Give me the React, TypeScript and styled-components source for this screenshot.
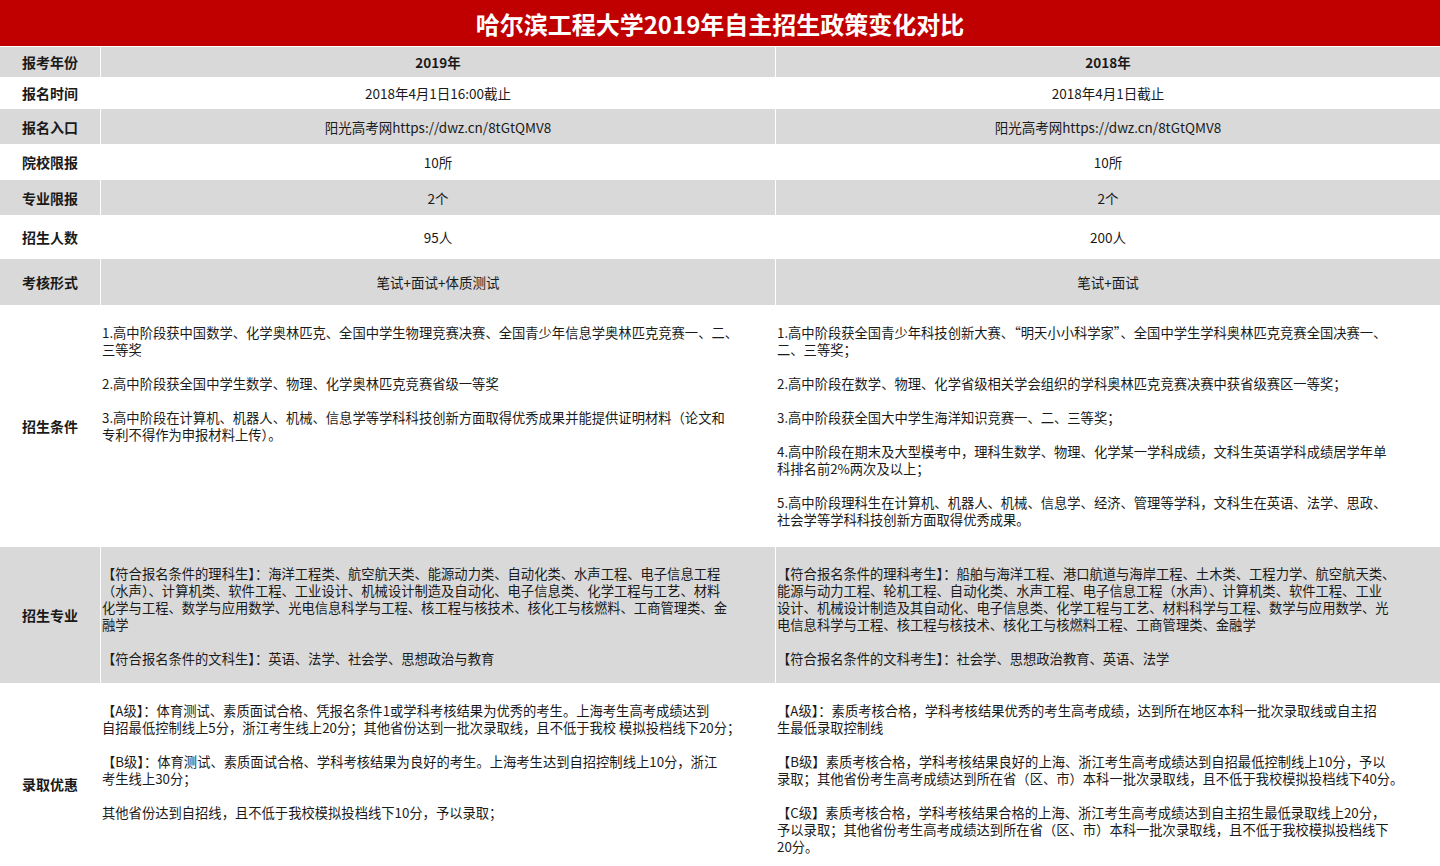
import React from "react";
import styled, { createGlobalStyle } from "styled-components";

const G = createGlobalStyle`
  body { margin: 0; background: #fff; font-family: "Noto Sans CJK SC", "Noto Sans", sans-serif; color: #1a1a1a; }
`;

const Page = styled.div`width: 1440px; height: 866px; overflow: hidden; background: #fff;`;
const Title = styled.div`
  height: 46px; background: #c00000; color: #fff; font-weight: 700; font-size: 24px;
  display: flex; align-items: center; justify-content: center; border-bottom: 1px solid #fff;
`;
const Row = styled.div<{ h: number; gray?: boolean }>`
  display: grid; grid-template-columns: 100px 674px 1fr; column-gap: 1px;
  height: ${(p) => p.h}px; background: ${(p) => (p.gray ? "#fff" : "#fff")};
  border-bottom: 1px solid #fff;
  > div { background: ${(p) => (p.gray ? "#d9d9d9" : "#fff")}; }
`;
const Label = styled.div`
  display: flex; align-items: center; padding-left: 22px; font-weight: 700; font-size: 14px;
`;
const Center = styled.div<{ bold?: boolean }>`
  display: flex; align-items: center; justify-content: center; font-size: 13.5px;
  font-weight: ${(p) => (p.bold ? 700 : 400)};
`;
const Text = styled.div`
  padding: 18px 0 0 1px; font-size: 13.3px; line-height: 17px; white-space: nowrap; overflow: hidden;
`;
const Para = styled.div`margin-bottom: 17px;`;
const L = styled.div``;

const P = ({ lines }: { lines: string[] }) => (
  <Para>{lines.map((l, i) => <L key={i}>{l}</L>)}</Para>
);

const simple: [string, number, boolean, string, string][] = [
  ["报名时间", 30, false, "2018年4月1日16:00截止", "2018年4月1日截止"],
  ["报名入口", 35, true, "阳光高考网https://dwz.cn/8tGtQMV8", "阳光高考网https://dwz.cn/8tGtQMV8"],
  ["院校限报", 34, false, "10所", "10所"],
  ["专业限报", 35, true, "2个", "2个"],
  ["招生人数", 42, false, "95人", "200人"],
  ["考核形式", 46, true, "笔试+面试+体质测试", "笔试+面试"],
];

export default function App() {
  return (
    <Page>
      <G />
      <Title>哈尔滨工程大学2019年自主招生政策变化对比</Title>
      <Row h={30} gray>
        <Label>报考年份</Label>
        <Center bold>2019年</Center>
        <Center bold>2018年</Center>
      </Row>
      {simple.map(([l, h, g, a, b]) => (
        <Row key={l} h={h} gray={g}>
          <Label>{l}</Label>
          <Center>{a}</Center>
          <Center>{b}</Center>
        </Row>
      ))}
      <Row h={240}>
        <Label>招生条件</Label>
        <Text>
          <P lines={["1.高中阶段获中国数学、化学奥林匹克、全国中学生物理竞赛决赛、全国青少年信息学奥林匹克竞赛一、二、", "三等奖"]} />
          <P lines={["2.高中阶段获全国中学生数学、物理、化学奥林匹克竞赛省级一等奖"]} />
          <P lines={["3.高中阶段在计算机、机器人、机械、信息学等学科科技创新方面取得优秀成果并能提供证明材料（论文和", "专利不得作为申报材料上传）。"]} />
        </Text>
        <Text>
          <P lines={["1.高中阶段获全国青少年科技创新大赛、“明天小小科学家”、全国中学生学科奥林匹克竞赛全国决赛一、", "二、三等奖；"]} />
          <P lines={["2.高中阶段在数学、物理、化学省级相关学会组织的学科奥林匹克竞赛决赛中获省级赛区一等奖；"]} />
          <P lines={["3.高中阶段获全国大中学生海洋知识竞赛一、二、三等奖；"]} />
          <P lines={["4.高中阶段在期末及大型模考中，理科生数学、物理、化学某一学科成绩，文科生英语学科成绩居学年单", "科排名前2%两次及以上；"]} />
          <P lines={["5.高中阶段理科生在计算机、机器人、机械、信息学、经济、管理等学科，文科生在英语、法学、思政、", "社会学等学科科技创新方面取得优秀成果。"]} />
        </Text>
      </Row>
      <Row h={136} gray>
        <Label>招生专业</Label>
        <Text>
          <P lines={["【符合报名条件的理科生】：海洋工程类、航空航天类、能源动力类、自动化类、水声工程、电子信息工程", "（水声）、计算机类、软件工程、工业设计、机械设计制造及自动化、电子信息类、化学工程与工艺、材料", "化学与工程、数学与应用数学、光电信息科学与工程、核工程与核技术、核化工与核燃料、工商管理类、金", "融学"]} />
          <P lines={["【符合报名条件的文科生】：英语、法学、社会学、思想政治与教育"]} />
        </Text>
        <Text>
          <P lines={["【符合报名条件的理科考生】：船舶与海洋工程、港口航道与海岸工程、土木类、工程力学、航空航天类、", "能源与动力工程、轮机工程、自动化类、水声工程、电子信息工程（水声）、计算机类、软件工程、工业", "设计、机械设计制造及其自动化、电子信息类、化学工程与工艺、材料科学与工程、数学与应用数学、光", "电信息科学与工程、核工程与核技术、核化工与核燃料工程、工商管理类、金融学"]} />
          <P lines={["【符合报名条件的文科考生】：社会学、思想政治教育、英语、法学"]} />
        </Text>
      </Row>
      <Row h={200}>
        <Label>录取优惠</Label>
        <Text>
          <P lines={["【A级】：体育测试、素质面试合格、凭报名条件1或学科考核结果为优秀的考生。上海考生高考成绩达到", "自招最低控制线上5分，浙江考生线上20分；其他省份达到一批次录取线，且不低于我校 模拟投档线下20分；"]} />
          <P lines={["【B级】：体育测试、素质面试合格、学科考核结果为良好的考生。上海考生达到自招控制线上10分，浙江", "考生线上30分；"]} />
          <P lines={["其他省份达到自招线，且不低于我校模拟投档线下10分，予以录取；"]} />
        </Text>
        <Text>
          <P lines={["【A级】：素质考核合格，学科考核结果优秀的考生高考成绩，达到所在地区本科一批次录取线或自主招", "生最低录取控制线"]} />
          <P lines={["【B级】素质考核合格，学科考核结果良好的上海、浙江考生高考成绩达到自招最低控制线上10分，予以", "录取；其他省份考生高考成绩达到所在省（区、市）本科一批次录取线，且不低于我校模拟投档线下40分。"]} />
          <P lines={["【C级】素质考核合格，学科考核结果合格的上海、浙江考生高考成绩达到自主招生最低录取线上20分，", "予以录取；其他省份考生高考成绩达到所在省（区、市）本科一批次录取线，且不低于我校模拟投档线下", "20分。"]} />
        </Text>
      </Row>
    </Page>
  );
}
